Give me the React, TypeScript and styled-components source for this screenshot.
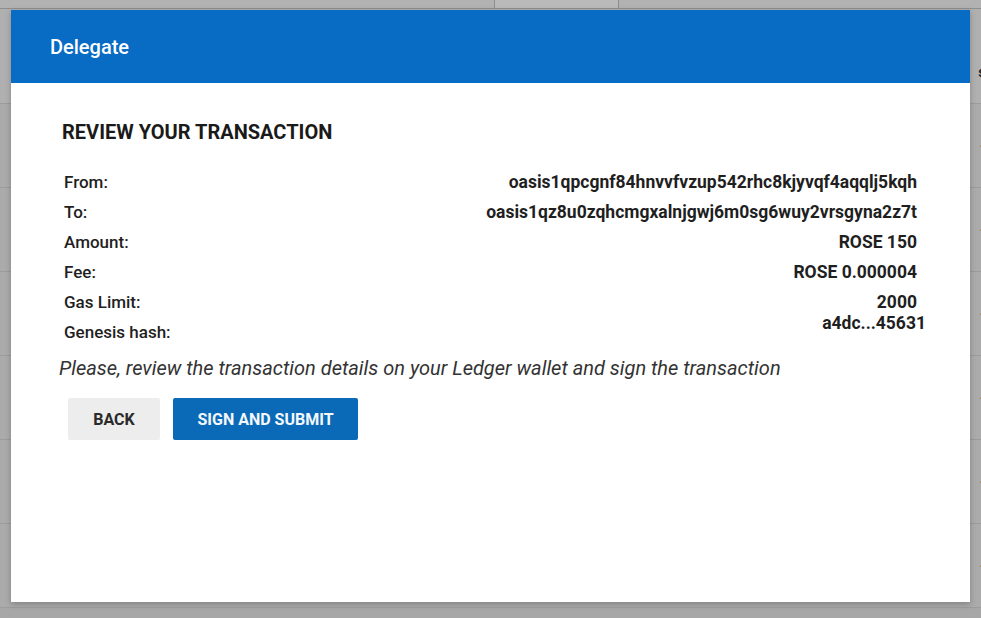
import React from 'react'
import styled, { createGlobalStyle } from 'styled-components'

const GlobalStyle = createGlobalStyle`
  html, body {
    margin: 0;
    padding: 0;
    width: 981px;
    height: 618px;
    overflow: hidden;
    font-family: Roboto, "Liberation Sans", Arial, sans-serif;
    background: #a7a7a7;
  }
`

const rows = [
  ['From:', 'oasis1qpcgnf84hnvvfvzup542rhc8kjyvqf4aqqlj5kqh'],
  ['To:', 'oasis1qz8u0zqhcmgxalnjgwj6m0sg6wuy2vrsgyna2z7t'],
  ['Amount:', 'ROSE 150'],
  ['Fee:', 'ROSE 0.000004'],
]

export default function App() {
  return (
    <>
      <GlobalStyle />
      <Page>
        <TopStrip>
          <StripCell />
          <StripCell $light />
          <StripCell />
        </TopStrip>
        <Table>
          <TableRow $head>
            <RowEdge>s</RowEdge>
          </TableRow>
          {[0, 1, 2, 3, 4, 5].map((i) => (
            <TableRow key={i}>
              <RowEdge>-</RowEdge>
            </TableRow>
          ))}
        </Table>

        <Modal>
          <Header>Delegate</Header>
          <Body>
            <Title>REVIEW YOUR TRANSACTION</Title>
            <Details>
              {rows.map(([label, value]) => (
                <React.Fragment key={label}>
                  <Label>{label}</Label>
                  <Value>{value}</Value>
                </React.Fragment>
              ))}
              <Label>Gas Limit:</Label>
              <Value>
                2000
                <Hash>a4dc...45631</Hash>
              </Value>
              <Label>Genesis hash:</Label>
              <Value />
            </Details>
            <Notice>
              Please, review the transaction details on your Ledger wallet and sign the transaction
            </Notice>
            <Actions>
              <Button>BACK</Button>
              <Button $primary>SIGN AND SUBMIT</Button>
            </Actions>
          </Body>
        </Modal>
      </Page>
    </>
  )
}

const Page = styled.div`
  position: relative;
  width: 981px;
  height: 618px;
  overflow: hidden;
`

const TopStrip = styled.div`
  display: grid;
  grid-template-columns: 494px 124px 1fr;
  height: 8px;
  border-bottom: 1px solid #8e8e8e;
`

const StripCell = styled.div<{ $light?: boolean }>`
  background: ${(p) => (p.$light ? '#bababa' : '#b2b2b2')};
  border-left: 1px solid #8e8e8e;
  &:first-child {
    border-left: none;
  }
`

const Table = styled.div`
  display: flex;
  flex-direction: column;
`

const TableRow = styled.div<{ $head?: boolean }>`
  height: ${(p) => (p.$head ? '95px' : '84px')};
  background: ${(p) => (p.$head ? '#b0b0b0' : '#ababab')};
  border-bottom: 1px solid #9c9c9c;
  display: flex;
  justify-content: flex-end;
  align-items: ${(p) => (p.$head ? 'flex-end' : 'center')};
  padding-bottom: ${(p) => (p.$head ? '22px' : '0')};
  box-sizing: border-box;
`

const RowEdge = styled.span`
  font-size: 15px;
  font-weight: 700;
  color: #222;
  margin-right: -5px;
`

const Modal = styled.div`
  position: absolute;
  left: 11px;
  top: 10px;
  width: 959px;
  height: 592px;
  background: #fff;
  box-shadow: 0 2px 6px rgba(0, 0, 0, 0.25);
  display: flex;
  flex-direction: column;
`

const Header = styled.div`
  height: 73px;
  background: #086bc4;
  color: #fff;
  font-size: 20px;
  font-weight: 500;
  display: flex;
  align-items: center;
  padding-left: 39px;
  flex-shrink: 0;
`

const Body = styled.div`
  padding: 37px 44px 0 48px;
  display: flex;
  flex-direction: column;
`

const Title = styled.h2`
  margin: 0 0 28px 3px;
  font-size: 20px;
  font-weight: 700;
  color: #1a1a1a;
  line-height: 24px;
`

const Details = styled.div`
  display: grid;
  grid-template-columns: 1fr auto;
  grid-auto-rows: 30px;
  margin-left: 5px;
  color: #1f1f1f;
`

const Label = styled.div`
  font-size: 17px;
  font-weight: 500;
  line-height: 20px;
`

const Value = styled.div`
  font-size: 17.5px;
  font-weight: 700;
  text-align: right;
  padding-right: 9px;
  line-height: 20px;
`

const Hash = styled.div`
  margin-right: -9px;
  line-height: 22px;
`

const Notice = styled.p`
  margin: 4px 0 0 0;
  font-size: 20px;
  font-style: italic;
  color: #333;
  line-height: 24px;
`

const Actions = styled.div`
  display: flex;
  gap: 13px;
  margin: 18px 0 0 9px;
`

const Button = styled.button<{ $primary?: boolean }>`
  height: 42px;
  width: ${(p) => (p.$primary ? '185px' : '92px')};
  padding: 0;
  border: none;
  border-radius: 2px;
  background: ${(p) => (p.$primary ? '#0a6ab8' : '#ededed')};
  color: ${(p) => (p.$primary ? '#f4f8fc' : '#2a2a2a')};
  font-family: Roboto, "Liberation Sans", Arial, sans-serif;
  font-size: 16px;
  font-weight: 700;
  cursor: pointer;
`
